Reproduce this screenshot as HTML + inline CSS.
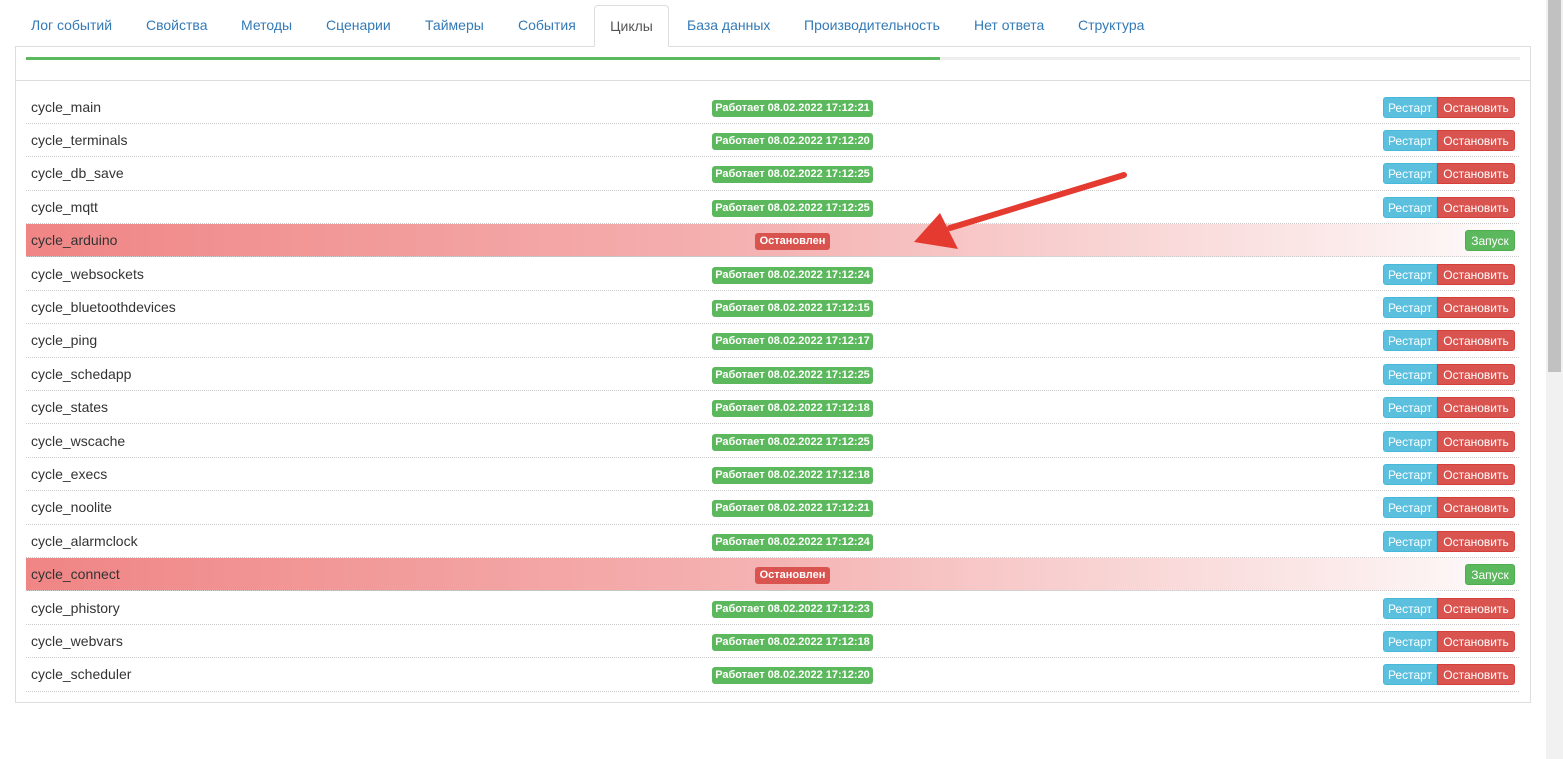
<!DOCTYPE html>
<html><head><meta charset="utf-8"><style>
*{box-sizing:border-box;margin:0;padding:0}
body{width:1563px;height:759px;background:#fff;font-family:"Liberation Sans",Arial,sans-serif;font-size:14px;color:#333;position:relative;overflow:hidden}
.tabs{position:absolute;left:15px;top:5px;width:1516px;height:42px;border-bottom:1px solid #ddd}
.tab{position:absolute;top:0;height:41px;line-height:41px;color:#337ab7;font-size:14px}
.tab.act{border:1px solid #ddd;border-bottom:1px solid #fff;height:42px;border-radius:4px 4px 0 0;color:#555;text-align:center;background:#fff}
.panel{position:absolute;left:15px;top:47px;width:1516px;height:656px;border:1px solid #ddd;border-top:none}
.prog{position:absolute;left:26px;top:57px;width:1494px;height:3px;background:#eee}
.prog div{width:914px;height:3px;background:#5cb85c}
.hr{position:absolute;left:16px;top:80px;width:1514px;height:1px;background:#ddd}
.row{position:absolute;left:26px;width:1493px;height:33.4px;border-bottom:1px dotted #ccc}
.row .n{position:absolute;left:5px;top:0;line-height:33px;font-size:14px}
.b{position:absolute;top:9px;height:17px;line-height:17px;font-size:11px;font-weight:bold;color:#fff;border-radius:3px;text-align:center}
.g{left:686px;width:161px;background:#5cb85c}
.r{left:729px;width:75px;background:#d9534f}
.btn{position:absolute;top:6px;height:21px;line-height:20px;font-size:12px;color:#fff;text-align:center}
.rs{left:1357px;width:54px;background:#5bc0de;border:1px solid #46b8da;border-radius:3px 0 0 3px}
.st{left:1411px;width:78px;background:#d9534f;border:1px solid #d43f3a;border-radius:0 3px 3px 0}
.zp{left:1439px;width:50px;background:#5cb85c;border:1px solid #4cae4c;border-radius:3px}
.red{background:linear-gradient(to right,#f08585,#f5b3b3 50%,#fdf4f4 95%,#fff)}
.sb{position:absolute;left:1546px;top:0;width:17px;height:759px;background:#f1f1f1}
.sb div{position:absolute;left:2px;top:0;width:13px;height:372px;background:#c1c1c1}
</style></head><body>
<div class="tabs">
<span class="tab" style="left:16px">Лог событий</span>
<span class="tab" style="left:131px">Свойства</span>
<span class="tab" style="left:226px">Методы</span>
<span class="tab" style="left:311px">Сценарии</span>
<span class="tab" style="left:410px">Таймеры</span>
<span class="tab" style="left:503px">События</span>
<span class="tab act" style="left:579px;width:75px">Циклы</span>
<span class="tab" style="left:672px">База данных</span>
<span class="tab" style="left:789px">Производительность</span>
<span class="tab" style="left:959px">Нет ответа</span>
<span class="tab" style="left:1063px">Структура</span>
</div>
<div class="panel"></div>
<div class="prog"><div></div></div>
<div class="hr"></div>
<div id="rows"></div>
<div class="sb"><div></div></div>
<script>
var d=[["cycle_main","17:12:21"],["cycle_terminals","17:12:20"],["cycle_db_save","17:12:25"],["cycle_mqtt","17:12:25"],["cycle_arduino",0],["cycle_websockets","17:12:24"],["cycle_bluetoothdevices","17:12:15"],["cycle_ping","17:12:17"],["cycle_schedapp","17:12:25"],["cycle_states","17:12:18"],["cycle_wscache","17:12:25"],["cycle_execs","17:12:18"],["cycle_noolite","17:12:21"],["cycle_alarmclock","17:12:24"],["cycle_connect",0],["cycle_phistory","17:12:23"],["cycle_webvars","17:12:18"],["cycle_scheduler","17:12:20"]];
var h="";d.forEach(function(r,i){var t=90.5+i*33.4;
if(r[1])h+='<div class="row" style="top:'+t+'px"><span class="n">'+r[0]+'</span><span class="b g">Работает 08.02.2022 '+r[1]+'</span><span class="btn rs">Рестарт</span><span class="btn st">Остановить</span></div>';
else h+='<div class="row red" style="top:'+t+'px"><span class="n">'+r[0]+'</span><span class="b r">Остановлен</span><span class="btn zp">Запуск</span></div>';});
document.getElementById("rows").innerHTML=h;
</script>
<svg style="position:absolute;left:0;top:0" width="1563" height="759">
<path d="M1124 175 L950 228" stroke="#e53a30" stroke-width="6" stroke-linecap="round"/>
<polygon points="914,242 940,213 958,249" fill="#e53a30"/>
</svg>
</body></html>
